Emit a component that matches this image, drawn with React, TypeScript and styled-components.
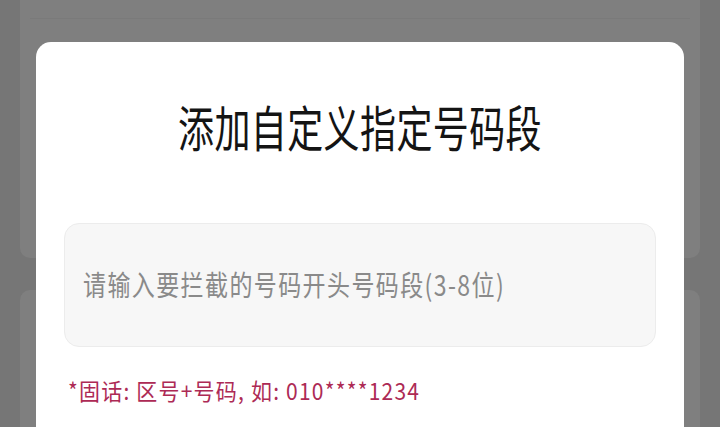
import styled, { createGlobalStyle } from "styled-components";

const GlobalStyle = createGlobalStyle`
  html, body {
    margin: 0;
    padding: 0;
    background: #777777;
    overflow: hidden;
  }
  * {
    box-sizing: border-box;
  }
`;

const Page = styled.div`
  width: 720px;
  height: 427px;
  position: relative;
  overflow: hidden;
  background: #767676;
  padding: 0 20px;
  display: flex;
  flex-direction: column;
  gap: 32px;
`;

const BackCard = styled.div<{ $height: number; $top?: boolean }>`
  height: ${(p) => p.$height}px;
  flex-shrink: 0;
  background: #7f7f7f;
  border-radius: ${(p) => (p.$top ? "0 0 10px 10px" : "10px 10px 0 0")};
`;

const Divider = styled.div`
  height: 19px;
  border-bottom: 1px solid #7a7a7a;
  margin: 0 10px;
`;

const Dialog = styled.div`
  position: absolute;
  left: 36px;
  top: 42px;
  width: 648px;
  height: 480px;
  background: #ffffff;
  border-radius: 15px;
  padding: 50px 28px 0;
  display: flex;
  flex-direction: column;
  font-family: "Noto Sans CJK SC", "Noto Sans", sans-serif;
`;

const Title = styled.h2`
  margin: 0;
  height: 66px;
  display: flex;
  align-items: center;
  justify-content: center;
  font-size: 36px;
  font-weight: 400;
  color: #141414;

  span {
    display: inline-block;
    transform: scaleY(1.35);
    letter-spacing: 0.4px;
  }
`;

const InputBox = styled.div`
  margin-top: 65px;
  height: 124px;
  background: #f7f7f7;
  border: 1.5px solid #ececec;
  border-radius: 15px;
  display: flex;
  align-items: center;
  padding: 0 18px 4px;
`;

const Placeholder = styled.span`
  display: inline-block;
  font-size: 23px;
  letter-spacing: 1.4px;
  color: #8a8a8a;
  transform: scaleY(1.25);
  transform-origin: left center;
`;

const Hint = styled.div`
  margin-top: 28px;
  padding-left: 4px;
  font-size: 21px;
  line-height: 30px;
  letter-spacing: 1.2px;
  color: #ad2a55;

  span {
    display: inline-block;
    transform: scaleY(1.1);
  }
`;

export default function App() {
  return (
    <>
      <GlobalStyle />
      <Page>
        <BackCard $height={258} $top>
          <Divider />
        </BackCard>
        <BackCard $height={200} />
        <Dialog>
          <Title>
            <span>添加自定义指定号码段</span>
          </Title>
          <InputBox>
            <Placeholder>请输入要拦截的号码开头号码段(3-8位)</Placeholder>
          </InputBox>
          <Hint>
            <span>*固话: 区号+号码, 如: 010****1234</span>
          </Hint>
        </Dialog>
      </Page>
    </>
  );
}
